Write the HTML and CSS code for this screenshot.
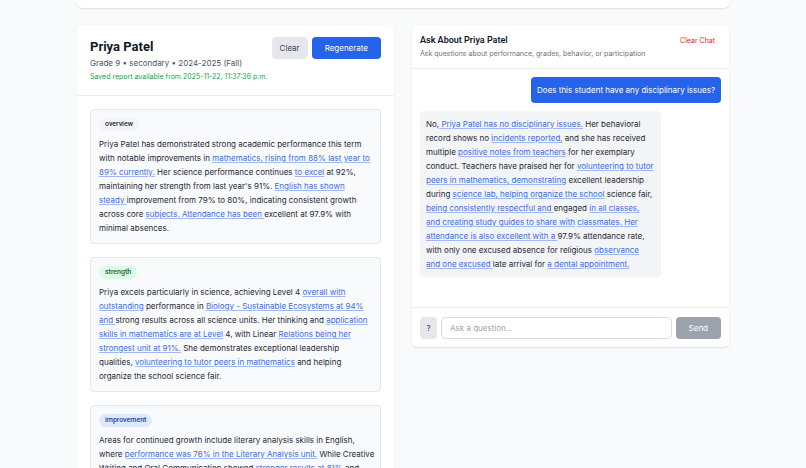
FILE: index.html
```
<!DOCTYPE html>
<html lang="en">
<head>
    <meta charset="UTF-8">
    <meta name="viewport" content="width=device-width, initial-scale=1.0">
    <title>Student Report</title>
    <link rel="stylesheet" href="styles.css">
</head>
<body>
    <div class="page">
        <div class="top-card"></div>

        <main class="columns">
            <section class="panel">
                <header class="report-header">
                    <div>
                        <h1>Priya Patel</h1>
                        <p class="meta">Grade 9 • secondary • 2024-2025 (Fall)</p>
                        <p class="saved">Saved report available from 2025-11-22, 11:37:36 p.m.</p>
                    </div>
                    <div class="actions">
                        <button type="button" class="btn btn-light">Clear</button>
                        <button type="button" class="btn btn-primary">Regenerate</button>
                    </div>
                </header>

                <div class="report-body">
                    <article class="card">
                        <span class="badge badge-overview">overview</span>
                        <p>
                            Priya Patel has demonstrated strong academic performance this term<br>
                            with notable improvements in <a href="#">mathematics, rising from 88% last year to<br>
                            89% currently.</a> Her science performance continues <a href="#">to excel</a> at 92%,<br>
                            maintaining her strength from last year's 91%. <a href="#">English has shown<br>
                            steady </a>improvement from 79% to 80%, indicating consistent growth<br>
                            across core <a href="#">subjects. Attendance has been </a>excellent at 97.9% with<br>
                            minimal absences.
                        </p>
                    </article>

                    <article class="card">
                        <span class="badge badge-strength">strength</span>
                        <p>
                            Priya excels particularly in science, achieving Level 4 <a href="#">overall with<br>
                            outstanding</a> performance in <a href="#">Biology - Sustainable Ecosystems at 94%<br>
                            and </a>strong results across all science units. Her thinking and <a href="#">application<br>
                            skills in mathematics are at Level</a> 4, with Linear <a href="#">Relations being her<br>
                            strongest unit at 91%.</a> She demonstrates exceptional leadership<br>
                            qualities, <a href="#">volunteering to tutor peers in mathematics</a> and helping<br>
                            organize the school science fair.
                        </p>
                    </article>

                    <article class="card">
                        <span class="badge badge-improvement">improvement</span>
                        <p>
                            Areas for continued growth include literary analysis skills in English,<br>
                            where <a href="#">performance was 76% in the Literary Analysis unit.</a> While Creative<br>
                            Writing and Oral Communication showed <a href="#">stronger results at 81%</a> and
                        </p>
                    </article>
                </div>
            </section>

            <section class="panel">
                <header class="chat-header">
                    <div>
                        <h2>Ask About Priya Patel</h2>
                        <p>Ask questions about performance, grades, behavior, or participation</p>
                    </div>
                    <button type="button" class="clear-chat">Clear Chat</button>
                </header>

                <div class="messages">
                    <div class="message message-user">Does this student have any disciplinary issues?</div>
                    <div class="message message-bot">
                        No,<a href="#"> Priya Patel has no disciplinary issues.</a> Her behavioral<br>
                        record shows no <a href="#">incidents reported,</a> and she has received<br>
                        multiple <a href="#">positive notes from teachers</a> for her exemplary<br>
                        conduct. Teachers have praised her for <a href="#">volunteering to tutor<br>
                        peers in mathematics, demonstrating</a> excellent leadership<br>
                        during <a href="#">science lab, helping organize the school</a> science fair,<br>
                        <a href="#">being consistently respectful and </a>engaged <a href="#">in all classes,<br>
                        and creating study guides to share with</a> <a href="#">classmates. Her<br>
                        attendance is also excellent with a </a>97.9% attendance rate,<br>
                        with only one excused absence for religious <a href="#">observance<br>
                        and one excused </a>late arrival for <a href="#">a dental appointment.</a>
                    </div>
                </div>

                <form class="chat-form">
                    <button type="button" class="btn btn-help">?</button>
                    <input type="text" aria-label="Ask a question" placeholder="Ask a question...">
                    <button type="submit" class="btn btn-send" disabled>Send</button>
                </form>
            </section>
        </main>
    </div>
</body>
</html>
```

FILE: styles.css
```
* {
    margin: 0;
    padding: 0;
    box-sizing: border-box;
    font-family: Inter, Roboto, sans-serif;
}

body {
    height: 100vh;
    overflow: hidden;
    background: #f9fafb;
    color: #1f2937;
    font-size: 8px;
    line-height: 14px;
}

.page {
    max-width: 652px;
    margin: 0 auto;
}

.top-card,
.panel {
    background: #fff;
    box-shadow: 0 1px 2px rgba(0, 0, 0, 0.1);
}

.top-card {
    height: 8px;
    margin-bottom: 17px;
    border-radius: 0 0 5px 5px;
}

.columns {
    display: grid;
    grid-template-columns: 1fr 1fr;
    align-items: start;
    gap: 18px;
}

.panel {
    min-width: 0;
    border-radius: 5px;
}

/* Report */
.report-header {
    display: flex;
    justify-content: space-between;
    align-items: flex-start;
    padding: 12px 13px 11px;
    border-bottom: 1px solid #eceef1;
    white-space: nowrap;
}

.report-header > div:first-child {
    min-width: 0;
}

h1 {
    color: #111827;
    font-family: Roboto, sans-serif;
    font-size: 13px;
    font-weight: 700;
    line-height: 19px;
}

.meta {
    color: #4b5563;
}

.saved {
    color: #16a34a;
    font-size: 7px;
}

.actions {
    display: flex;
    gap: 4px;
}

.btn {
    height: 22px;
    border: none;
    border-radius: 4px;
    font-size: 8px;
    line-height: 14px;
    cursor: pointer;
}

.btn-light {
    padding: 0 8px;
    background: #e5e7eb;
    color: #374151;
}

.btn-primary {
    padding: 0 13px;
    background: #2563eb;
    color: #fff;
}

.report-body {
    display: flex;
    flex-direction: column;
    gap: 13px;
    padding: 13px;
}

.card {
    display: flex;
    flex-direction: column;
    align-items: flex-start;
    gap: 6px;
    padding: 8px;
    border: 1px solid #e5e7eb;
    border-radius: 4px;
    background: #f9fafb;
    white-space: nowrap;
}

.badge {
    padding: 0 6px;
    border-radius: 7px;
    font-family: Roboto, sans-serif;
    font-size: 7px;
    font-weight: 500;
    line-height: 13px;
}

.badge-overview {
    background: #f3f4f6;
    color: #1f2937;
}

.badge-strength {
    background: #dcfce7;
    color: #166534;
}

.badge-improvement {
    background: #dbeafe;
    color: #1e40af;
}

.card a,
.message a {
    color: #416be6;
    text-decoration: underline 1px #9db8f5;
    text-underline-offset: 1px;
}

/* Chat */
.chat-header {
    display: flex;
    justify-content: space-between;
    align-items: flex-start;
    padding: 8px 8px 7px;
    border-bottom: 1px solid #eceef1;
    white-space: nowrap;
}

h2 {
    color: #111827;
    font-family: Roboto, sans-serif;
    font-size: 9px;
    font-weight: 600;
}

.chat-header p {
    color: #6b7280;
    font-size: 7px;
}

.clear-chat {
    padding: 1px 6px;
    border: none;
    background: none;
    color: #dc2626;
    font-size: 7px;
    line-height: 14px;
    cursor: pointer;
}

.messages {
    display: flex;
    flex-direction: column;
    gap: 8px;
    min-height: 238px;
    padding: 8px;
}

.message {
    padding: 6px;
    border-radius: 4px;
    white-space: nowrap;
}

.message-user {
    align-self: flex-end;
    background: #2563eb;
    color: #fff;
}

.message-bot {
    width: 80%;
    background: #f3f4f6;
}

.chat-form {
    display: flex;
    gap: 4px;
    padding: 9px 8px 8px;
    border-top: 1px solid #eceef1;
}

.chat-form input {
    flex: 1;
    min-width: 0;
    height: 22px;
    padding: 0 8px;
    border: 1px solid #d9dce1;
    border-radius: 4px;
    font-size: 8px;
    outline: none;
}

.chat-form input::placeholder {
    color: #9ca3af;
}

.btn-help {
    width: 17px;
    background: #e5e7eb;
    color: #374151;
}

.btn-send {
    padding: 0 13px;
    background: #9ca3af;
    color: #fff;
}
```
